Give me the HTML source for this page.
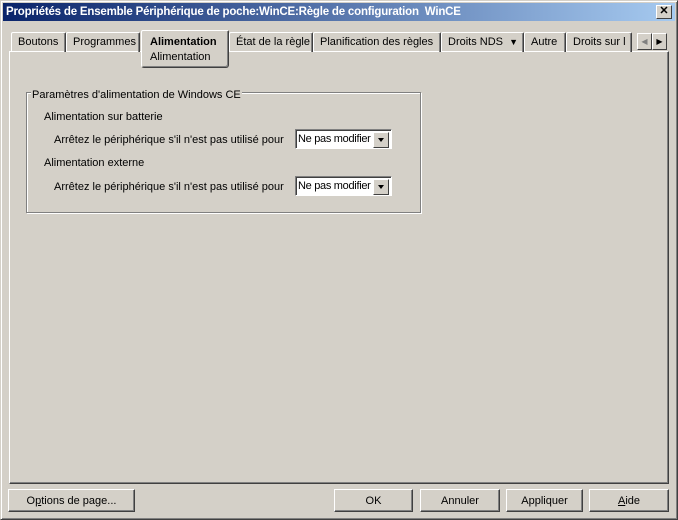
<!DOCTYPE html>
<html><head><meta charset="utf-8"><style>
*{margin:0;padding:0;box-sizing:border-box}
body{width:678px;height:520px;background:#d4d0c8;font:11px "Liberation Sans",sans-serif;color:#000;position:relative;overflow:hidden}
.a{position:absolute;white-space:nowrap}
.win{left:0;top:0;width:678px;height:520px;border:1px solid;border-color:#d4d0c8 #404040 #404040 #d4d0c8;box-shadow:inset 1px 1px 0 #fff,inset -1px -1px 0 #808080}
.title{left:3px;top:3px;width:672px;height:18px;background:linear-gradient(90deg,#0a246a,#a6caf0);color:#fff;font-weight:bold;font-size:11.5px;line-height:19px;padding-left:3px;letter-spacing:-0.2px}
.xb{left:656px;top:5px;width:16px;height:14px;background:#d4d0c8;border:1px solid;border-color:#fff #404040 #404040 #fff;font-size:11px;line-height:11px;text-align:center;font-weight:bold;color:#000}
.tab{top:32px;height:20px;border:1px solid;border-color:#fff #404040 transparent #fff;border-bottom:none;box-shadow:inset -1px 0 0 #808080;line-height:19px;padding-left:6px;border-radius:2px 2px 0 0}
.panel{left:9px;top:51px;width:660px;height:433px;border:1px solid;border-color:#fff #404040 #404040 #fff;box-shadow:inset -1px -1px 0 #808080}
.btn{top:489px;height:23px;border:1px solid;border-color:#fff #404040 #404040 #fff;box-shadow:inset -1px -1px 0 #808080;text-align:center;line-height:23px}
.grp{left:26px;top:92px;width:395px;height:121px;border:1px solid #808080;box-shadow:1px 1px 0 #fff,inset 1px 1px 0 #fff}
.combo{width:97px;height:20px;background:#fff;border:1px solid;border-color:#808080 #fff #fff #808080;box-shadow:inset 1px 1px 0 #404040;padding:3px 0 0 2px;letter-spacing:-0.3px}
.combo b{position:absolute;right:2px;top:2px;width:16px;height:16px;background:#d4d0c8;border:1px solid;border-color:#fff #404040 #404040 #fff}
.combo b:after{content:"";position:absolute;left:4px;top:5px;border:3.5px solid transparent;border-top:4px solid #000}
</style></head><body>
<div class="a win"></div>
<div class="a title">Propriétés de Ensemble Périphérique de poche:WinCE:Règle de configuration&nbsp; WinCE</div>
<div class="a xb">✕</div>
<div class="a panel"></div>
<div class="a tab" style="left:11px;width:55px">Boutons</div>
<div class="a tab" style="left:66px;width:74px">Programmes</div>
<div class="a tab" style="left:229px;width:84px">État de la règle</div>
<div class="a tab" style="left:313px;width:128px">Planification des règles</div>
<div class="a tab" style="left:441px;width:83px">Droits NDS &nbsp;<span style="font-size:9px">▼</span></div>
<div class="a tab" style="left:524px;width:42px">Autre</div>
<div class="a tab" style="left:566px;width:66px;overflow:hidden">Droits sur l</div>
<div class="a" style="left:141px;top:30px;width:88px;height:38px;background:#d4d0c8;border:1px solid;border-color:#fff #404040 #404040 #fff;box-shadow:inset -1px -1px 0 #808080;padding:4px 0 0 8px;line-height:15px;border-radius:2px 2px 3px 3px"><b>Alimentation</b><br>Alimentation</div>
<div class="a" style="left:637px;top:33px;width:15px;height:17px;border:1px solid;border-color:#fff #404040 #404040 #fff;color:#808080;font-size:8px;text-align:center;line-height:15px">◀</div>
<div class="a" style="left:652px;top:33px;width:15px;height:17px;border:1px solid;border-color:#fff #404040 #404040 #fff;font-size:8px;text-align:center;line-height:15px">▶</div>
<div class="a grp"></div>
<div class="a" style="left:31px;top:89px;background:#d4d0c8;padding:0 1px">Paramètres d'alimentation de Windows CE</div>
<div class="a" style="left:44px;top:111px">Alimentation sur batterie</div>
<div class="a" style="left:54px;top:134px">Arrêtez le périphérique s'il n'est pas utilisé pour</div>
<div class="a combo" style="left:295px;top:129px">Ne pas modifier<b></b></div>
<div class="a" style="left:44px;top:157px">Alimentation externe</div>
<div class="a" style="left:54px;top:181px">Arrêtez le périphérique s'il n'est pas utilisé pour</div>
<div class="a combo" style="left:295px;top:176px">Ne pas modifier<b></b></div>
<div class="a btn" style="left:8px;width:127px">O<u>p</u>tions de page...</div>
<div class="a btn" style="left:334px;width:79px">OK</div>
<div class="a btn" style="left:420px;width:80px">Annuler</div>
<div class="a btn" style="left:506px;width:77px">Appliquer</div>
<div class="a btn" style="left:589px;width:80px"><u>A</u>ide</div>
</body></html>
